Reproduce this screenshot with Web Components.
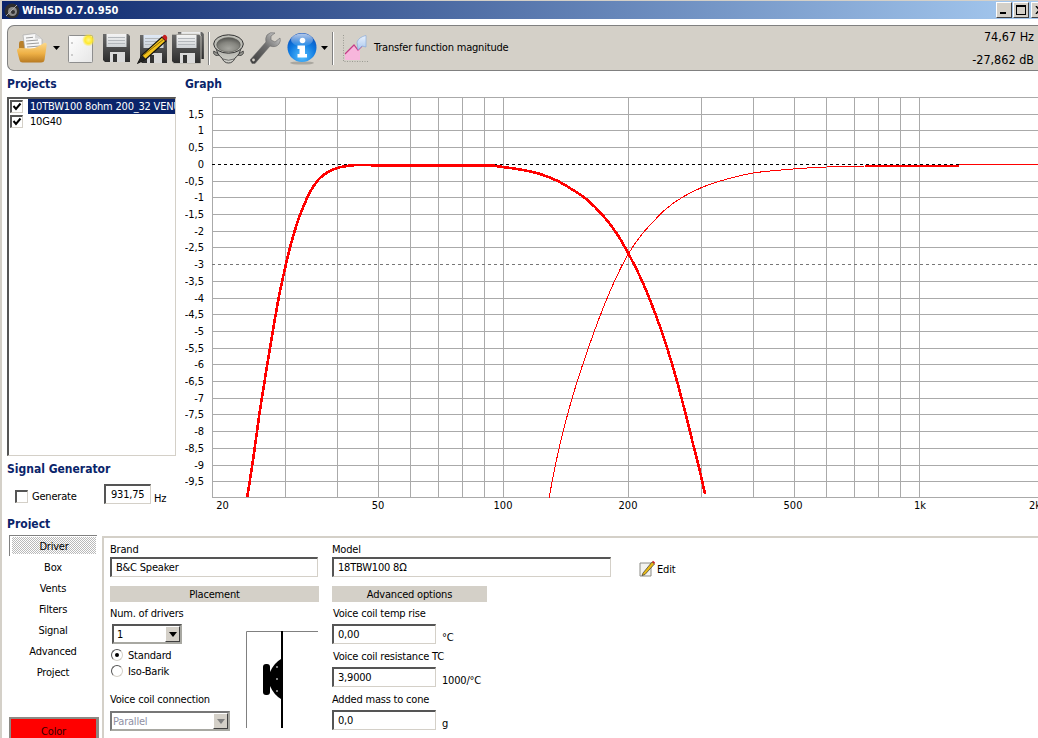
<!DOCTYPE html>
<html lang="en">
<head>
<meta charset="utf-8">
<title>WinISD</title>
<style>
html,body{margin:0;padding:0;background:#fff;overflow:hidden}
</style>
</head>
<body>
<wi-app></wi-app>
<script>
const FONT = '"DejaVu Sans","Liberation Sans",sans-serif';
function def(name, css, html, init){
  customElements.define(name, class extends HTMLElement{
    constructor(){super();const s=this.attachShadow({mode:'open'});s.innerHTML='<style>'+css+'</style>'+html;}
    connectedCallback(){ if(init && !this._d){this._d=1;init(this,this.shadowRoot);} }
  });
}
const floppy=(id,label)=>`<defs><linearGradient id="${id}b" x1="0" y1="0" x2="0" y2="1"><stop offset="0" stop-color="#6a6a6a"/><stop offset="1" stop-color="#2c2c2c"/></linearGradient><linearGradient id="${id}l" x1="0" y1="0" x2="0" y2="1"><stop offset="0" stop-color="${label}"/><stop offset="1" stop-color="#cfd3d6"/></linearGradient></defs>
<path d="M1 0H26L28 2V28H3L1 26Z" fill="url(#${id}b)"/><rect x="4.500" y="0" width="20" height="13" fill="url(#${id}l)"/><path d="M6 3.500H23M6 6.500H23M6 9.500H23" stroke="#b4b8bc" stroke-width="1"/><rect x="8" y="18" width="15" height="10" fill="#d9d9d9"/><rect x="11" y="20" width="4" height="8" fill="#333"/>`;
const ICONS={
 folder:[30,30,`<defs><linearGradient id="fa" x1="0" y1="0" x2="0" y2="1"><stop offset="0" stop-color="#fcd98a"/><stop offset=".55" stop-color="#eeb045"/><stop offset="1" stop-color="#b87a22"/></linearGradient></defs>
<path d="M2 11Q2 8 4 8H9L11 10H24V20H2Z" fill="#b9802a"/><path d="M6 2L18 0.500L25 6L25 17H8Z" fill="#f7f7f7" stroke="#a9a9a9" stroke-width=".7"/><path d="M9 5L16 4.300M9 8L21 7M9.500 11L22 10M10 14L23 13" stroke="#9c9c9c" stroke-width="1"/><path d="M18 .5V5.500L25 6Z" fill="#d6d6d6"/><path d="M0 17.500Q0 15 3 15L13 15.500Q18 15.500 22 13L27 10Q30 9 29.700 12L27.500 27Q27 29.500 24 29.500H5.500Q3 29.500 2.500 27Z" fill="url(#fa)"/>`],
 page:[27,29,`<defs><linearGradient id="pa" x1="0" y1="0" x2="1" y2="1"><stop offset="0" stop-color="#fff"/><stop offset="1" stop-color="#e6e6e6"/></linearGradient><radialGradient id="pb"><stop offset="0" stop-color="#fff68a"/><stop offset=".55" stop-color="#ffe92e"/><stop offset="1" stop-color="#ffe92e" stop-opacity="0"/></radialGradient></defs>
<rect x=".5" y="1.500" width="24" height="27" rx="1" fill="url(#pa)" stroke="#8e8e8e"/><circle cx="4" cy="9" r=".8" fill="#999"/><circle cx="4" cy="21" r=".8" fill="#999"/><circle cx="20.500" cy="6" r="6.500" fill="url(#pb)"/>`],
 save:[28,29,floppy('s','#f4f4f4')],
 saveas:[31,30,floppy('a','#dfe9f7').replace(/<path d="M1 0H26/,'<g transform="translate(2 1)"><path d="M1 0H26')+`</g><path d="M1 29L5 21L25 3L29 7L9 25Z" fill="#f2c21c" stroke="#111" stroke-width="1.200"/><path d="M4 23L27 5" stroke="#8b6a08" stroke-width="1"/><path d="M25 3L27 1Q28 .5 29 1.500L30 3Q30.500 4 30 5L29 7Z" fill="#c81e1e"/><path d="M1 29L5 21L9 25Z" fill="#222"/>`],
 saveall:[32,32,`<g transform="translate(5 0) scale(.96)">${floppy('x','#eeeeee')}</g><g transform="translate(0 3)">${floppy('y','#f4f4f4').replace('M1 0H26L28 2V28H3L1 26Z','M-.5 -.8H27L29 1V28.500H2L-.5 26Z').replace('fill="url(#yb)"','fill="url(#yb)" stroke="#d4d0c8" stroke-width=".8"')}</g>`],
 speaker:[31,30,`<defs><radialGradient id="ca" cx=".5" cy=".75" r=".7"><stop offset="0" stop-color="#a6a6a0"/><stop offset=".6" stop-color="#85857f"/><stop offset="1" stop-color="#5a5a56"/></radialGradient><linearGradient id="cb" x1="0" y1="0" x2="0" y2="1"><stop offset="0" stop-color="#a8a8a2"/><stop offset="1" stop-color="#d2d2cc"/></linearGradient></defs>
<path d="M.8 17Q-.5 20 3 21.500L7 21ZM30.200 17Q31.500 20 28 21.500L24 21Z" fill="#9a9a94" stroke="#333" stroke-width=".8"/><path d="M2.500 12Q4 21 9 24Q11 29 15.500 29Q20 29 22 24Q27 21 28.500 12Z" fill="url(#cb)" stroke="#333" stroke-width=".9"/><path d="M10 25Q15.500 27.500 21 25" fill="none" stroke="#555" stroke-width=".8"/><ellipse cx="15.500" cy="10" rx="14.800" ry="9.200" fill="#bdbdb6" stroke="#333" stroke-width="1"/><ellipse cx="15.500" cy="10.800" rx="11.800" ry="7.200" fill="url(#ca)" stroke="#5d5d58" stroke-width=".6"/>`],
 wrench:[31,32,`<defs><linearGradient id="wa" x1="0" y1="1" x2="1" y2="0"><stop offset="0" stop-color="#3a3a3a"/><stop offset=".55" stop-color="#6f6f6f"/><stop offset="1" stop-color="#d9d9d9"/></linearGradient></defs>
<path d="M0 28L2 31.500L5 31.500L20 14Q26 16 29 12Q31 9 30 6L25 10L21 8L21 4L25 1Q20 -.5 17 3Q15 6 16 10Z" fill="url(#wa)" stroke="#6a6a6a" stroke-width=".6"/><circle cx="3.500" cy="28" r="1.400" fill="#d4d0c8"/>`],
 info:[30,32,`<defs><radialGradient id="ia" cx=".5" cy=".8" r=".8"><stop offset="0" stop-color="#55c0ff"/><stop offset=".6" stop-color="#0d78e0"/><stop offset="1" stop-color="#0a4cb8"/></radialGradient><linearGradient id="ib" x1="0" y1="0" x2="0" y2="1"><stop offset="0" stop-color="#fff" stop-opacity=".7"/><stop offset="1" stop-color="#fff" stop-opacity=".05"/></linearGradient></defs>
<ellipse cx="15" cy="30" rx="12" ry="1.600" fill="#8e8c86" opacity=".6"/><circle cx="15" cy="14.500" r="14.500" fill="url(#ia)"/><ellipse cx="15" cy="7" rx="11" ry="6.500" fill="url(#ib)"/><circle cx="15.500" cy="7.500" r="2.800" fill="#fff"/><path d="M10.500 12.500H18V21H20V24.500H10.500V21H12.500V16H10.500Z" fill="#fff"/>`],
 graph:[27,29,`<defs><linearGradient id="ga" x1="0" y1="0" x2="0" y2="1"><stop offset="0" stop-color="#eaf2fd"/><stop offset="1" stop-color="#a9c7ee"/></linearGradient></defs>
<path d="M2.500 0V26.500H27" fill="none" stroke="#9a9a92" stroke-dasharray="1 1.500"/><path d="M4 25V19L13 10L17 15L19 14V25Z" fill="#f7b6dc"/><path d="M4 19L13 10L17 15L21 11" fill="none" stroke="#c43c86" stroke-width="1.200"/><path d="M17 15L16 7Q18 2 25 .5V12L21 11Z" fill="url(#ga)" stroke="#7da5da" stroke-width=".6"/>`],
 edit:[16,17,`<path d="M1 3H12V16H1Z" fill="#f3f3f0" stroke="#8c8c86"/><path d="M4 13L13 2L15.500 4L6 14.500L3 15.500Z" fill="#e8b917" stroke="#3a3a30" stroke-width=".7"/><path d="M13 2L14 .8L16 2.500L15.500 4Z" fill="#c22"/>`],
 caret:[7,4,`<path d="M0 0H7L3.500 4Z" fill="#000"/>`],
 app:[16,16,`<circle cx="8" cy="8" r="7.500" fill="#2e2e2e"/><circle cx="8.500" cy="8.500" r="4.500" fill="#8a8a8a"/><circle cx="9" cy="9" r="2" fill="#333"/><path d="M2 13L13 2" stroke="#aaa" stroke-width="1"/>`]
};
def('wi-icon',':host{display:block;flex:none;line-height:0}svg{display:block}','',(h,s)=>{
  const [w,v,body]=ICONS[h.getAttribute('name')];
  s.innerHTML+=`<svg xmlns="http://www.w3.org/2000/svg" width="${w}" height="${v}" viewBox="0 0 ${w} ${v}">${body}</svg>`;
});
def('wi-heading',`:host{display:block;height:16px;font:bold 12px/16px ${FONT};font-stretch:condensed;letter-spacing:0;color:#0a246a;overflow:hidden;white-space:nowrap}`,'<slot></slot>');
def('wi-label',`:host{display:block;height:14px;line-height:16px;white-space:nowrap}`,'<slot></slot>');
def('wi-band',`:host{display:block;height:16px;line-height:18px;background:#d4d0c8;text-align:center;white-space:nowrap}`,'<slot></slot>');
def('wi-input',`:host{display:block;box-sizing:border-box;height:20px;border-style:solid;border-width:2px 1px 1px 2px;border-color:#555 #d4d0c8 #d4d0c8 #555;background:#fff;padding-left:4px;line-height:18px;white-space:nowrap;overflow:hidden}`,'<slot></slot>');
def('wi-select',`:host{display:flex;box-sizing:border-box;height:20px;border-style:solid;border-width:2px;border-color:#555 #a8a8a2 #a8a8a2 #555;background:#fff;line-height:18px;white-space:nowrap}
.t{flex:1;padding-left:3px;overflow:hidden}
.b{width:15px;box-sizing:border-box;background:#d4d0c8;border:1px solid;border-color:#fff #404040 #404040 #fff;display:flex;align-items:center;justify-content:center}
.b i{width:0;height:0;border:4px solid transparent;border-top:5px solid #000;border-bottom:0}
:host([disabled]) .t{color:#8f8fa3;padding-left:1px}
:host([disabled]) .b i{border-top-color:#808080}
:host([disabled]){border-color:#777 #a8a8a2 #a8a8a2 #777}`,'<div class="t"><slot></slot></div><div class="b"><i></i></div>');
def('wi-check',`:host{display:block;flex:none;box-sizing:border-box;width:13px;height:13px;border-style:solid;border-width:2px 1px 1px 2px;border-color:#555 #d4d0c8 #d4d0c8 #555;background:#fff}
svg{display:none;width:10px;height:10px}
:host([checked]) svg{display:block}`,'<svg viewBox="0 0 10 10"><path d="M1.500 4L4 7L8.500 1.500" fill="none" stroke="#000" stroke-width="2"/></svg>');
def('wi-radio',`:host{display:flex;align-items:center;height:16px;line-height:16px;white-space:nowrap}
.c{box-sizing:border-box;width:12px;height:12px;border-radius:50%;border:1px solid;border-color:#555 #d4d0c8 #d4d0c8 #555;margin:0 5px 0 1px;display:flex;align-items:center;justify-content:center;background:#fff}
.c i{width:4px;height:4px;border-radius:50%;background:#000;display:none}
.x{padding-top:2px}
:host([checked]) .c i{display:block}`,'<div class="c"><i></i></div><span class="x"><slot></slot></span>');
def('wi-listrow',`:host{display:flex;align-items:center;height:15px;line-height:15px;white-space:nowrap;overflow:hidden;padding-left:1px}
.t{margin-left:5px;padding-left:2px;flex:1;overflow:hidden;height:15px}
:host([selected]) .t{background:#0a246a;color:#fff}`,'<wi-check checked></wi-check><div class="t"><slot></slot></div>');
def('wi-list',`:host{display:block;box-sizing:border-box;border-style:solid;border-width:2px 1px 1px 2px;border-color:#555 #d4d0c8 #d4d0c8 #555;background:#fff;overflow:hidden;padding-top:0}`,'<slot></slot>');
def('wi-winbtn',`:host{display:flex;flex:none;box-sizing:border-box;width:16px;height:16px;background:#d4d0c8;border:1px solid;border-color:#fff #404040 #404040 #fff;align-items:center;justify-content:center}
svg{display:block}`,'<slot></slot>');
def('wi-titlebar',`:host{display:flex;align-items:center;height:18px;background:linear-gradient(90deg,#0a246a,#a6caf0);color:#fff;font:bold 11px ${FONT};font-stretch:condensed;letter-spacing:0;white-space:nowrap;overflow:hidden}
wi-icon{margin:1px 2px 0 2px}
.s{flex:1}
.b{display:flex;gap:1px;margin-right:-9px}
.b wi-winbtn+wi-winbtn+wi-winbtn{margin-left:1px}`,
`<wi-icon name="app"></wi-icon><span><slot></slot></span><div class="s"></div><div class="b">
<wi-winbtn><svg width="8" height="8"><rect x="0" y="6" width="6" height="2" fill="#000"/></svg></wi-winbtn>
<wi-winbtn><svg width="10" height="10"><rect x=".5" y="1" width="9" height="8.500" fill="none" stroke="#000"/><rect y="0" width="10" height="2" fill="#000"/></svg></wi-winbtn>
<wi-winbtn><svg width="9" height="8"><path d="M1 0L8 8M8 0L1 8" stroke="#000" stroke-width="1.500"/></svg></wi-winbtn></div>`);
def('wi-toolbar',`:host{display:flex;align-items:center;box-sizing:border-box;height:46px;width:1031px;background:#d4d0c8;border:1px solid #808080;border-right:0;border-radius:7px 0 0 7px;white-space:nowrap}
.sep{width:1px;height:33px;background:#808080;border-right:1px solid #fff;flex:none}
.lbl{margin-left:6px;margin-top:-2px;flex:1}
.r{display:flex;flex-direction:column;align-items:flex-end;justify-content:space-between;height:41px;font-size:12.500px;letter-spacing:0;line-height:18px;margin-right:4px;margin-top:1px}`,
`<wi-icon name="folder" style="margin-left:9px"></wi-icon>
<wi-icon name="caret" style="margin-left:6px"></wi-icon>
<wi-icon name="page" style="margin-left:8px;margin-top:1px"></wi-icon>
<wi-icon name="save" style="margin-left:7px;margin-top:1px"></wi-icon>
<wi-icon name="saveas" style="margin-left:7px;margin-top:1px"></wi-icon>
<wi-icon name="saveall" style="margin-left:4px"></wi-icon>
<div class="sep" style="margin-left:4px"></div>
<wi-icon name="speaker" style="margin-left:3px;margin-top:1px"></wi-icon>
<wi-icon name="wrench" style="margin-left:6px"></wi-icon>
<wi-icon name="info" style="margin-left:6px;margin-top:1px"></wi-icon>
<wi-icon name="caret" style="margin-left:4px"></wi-icon>
<div class="sep" style="margin-left:4px"></div>
<wi-icon name="graph" style="margin-left:7px;margin-top:2px"></wi-icon>
<div class="lbl">Transfer function magnitude</div>
<div class="r"><span>74,67 Hz</span><span>-27,862 dB</span></div>`);
def('wi-tabs',`:host{display:flex;flex-direction:column;height:203px;flex:none;width:90px;position:relative}
.t{height:21px;line-height:23px;text-align:center;width:88px;box-sizing:border-box}
.t.on{border-top:1px solid #808080;border-left:1px solid #808080;padding:1px 1px 2px 2px;line-height:19px}
.t.on span{display:block;height:17px;background:repeating-conic-gradient(#b9b9b9 0 25%,#fff 0 50%) 0 0/2px 2px}
.c{margin-top:auto;height:21px;box-sizing:border-box;background:#f00;border:2px solid #8c8a84;border-bottom:0;border-right-width:3px;text-align:center;line-height:26px;color:#300}`,
`<div class="t on"><span>Driver</span></div><div class="t">Box</div><div class="t">Vents</div><div class="t">Filters</div><div class="t">Signal</div><div class="t">Advanced</div><div class="t">Project</div><div class="c">Color</div>`);
def('wi-diagram',`:host{display:block;flex:none;width:72px;height:97px;margin-top:11px}svg{display:block}`,
`<svg width="72" height="97" viewBox="0 0 72 97" shape-rendering="geometricPrecision"><path d="M.5 97V.5H72" fill="none" stroke="#808080"/><rect x="35" y="0" width="2" height="97" fill="#000"/><rect x="17" y="33" width="7" height="31" rx="3" fill="#000"/><path d="M24 41Q28 32 35 28V68Q28 64 24 55Z" fill="#000"/><circle cx="31" cy="36" r="1" fill="#aaa"/><circle cx="31" cy="48" r="1" fill="#aaa"/><circle cx="31" cy="60" r="1" fill="#aaa"/></svg>`);
def('wi-panel',`:host{display:grid;grid-template-columns:222px 1fr;box-sizing:border-box;height:202px;margin-top:1px;flex:1;border-left:2px solid #d4d0c8;border-top:2px solid #d4d0c8;padding:4px 0 0 6px;overflow:hidden}
.col{display:flex;flex-direction:column;align-items:flex-start}
.row{display:flex;align-items:flex-start;height:20px}
.u{margin-left:6px;line-height:14px;margin-top:7px}
.pl{display:flex}
.pl .l{width:136px;display:flex;flex-direction:column;align-items:flex-start}
.edit{display:flex;align-items:center;margin:3px 0 0 28px;gap:2px}
.edit span{padding-top:2px}`,
`<div class="col">
<wi-label>Brand</wi-label>
<wi-input style="width:208px;margin-top:1px">B&amp;C Speaker</wi-input>
<wi-band style="width:209px;margin-top:9px">Placement</wi-band>
<wi-label style="margin-top:4px">Num. of drivers</wi-label>
<div class="pl">
 <div class="l">
  <wi-select style="width:70px;margin:4px 0 0 2px">1</wi-select>
  <wi-radio checked style="margin-top:3px">Standard</wi-radio>
  <wi-radio>Iso-Barik</wi-radio>
  <wi-label style="margin-top:13px">Voice coil connection</wi-label>
  <wi-select disabled style="width:120px;margin-top:5px">Parallel</wi-select>
 </div>
 <wi-diagram></wi-diagram>
</div>
</div>
<div class="col">
<wi-label>Model</wi-label>
<div class="row" style="margin-top:1px">
 <wi-input style="width:279px">18TBW100 8Ω</wi-input>
 <div class="edit"><wi-icon name="edit"></wi-icon><span>Edit</span></div>
</div>
<wi-band style="width:155px;margin-top:9px">Advanced options</wi-band>
<wi-label style="margin:4px 0 0 1px">Voice coil temp rise</wi-label>
<div class="row" style="margin-top:4px"><wi-input style="width:104px">0,00</wi-input><span class="u">°C</span></div>
<wi-label style="margin:5px 0 0 1px">Voice coil resistance TC</wi-label>
<div class="row" style="margin-top:4px"><wi-input style="width:104px">3,9000</wi-input><span class="u">1000/°C</span></div>
<wi-label style="margin-top:5px">Added mass to cone</wi-label>
<div class="row" style="margin-top:4px"><wi-input style="width:104px">0,0</wi-input><span class="u">g</span></div>
</div>`);
const HY=[[114,'1,5'],[130,'1'],[147,'0,5'],[164,'0'],[181,'-0,5'],[197,'-1'],[214,'-1,5'],[231,'-2'],[247,'-2,5'],[264,'-3'],[281,'-3,5'],[298,'-4'],[314,'-4,5'],[331,'-5'],[348,'-5,5'],[364,'-6'],[381,'-6,5'],[398,'-7'],[414,'-7,5'],[431,'-8'],[448,'-8,5'],[465,'-9'],[481,'-9,5']];
const VX=[212,285,337,378,410,438,462,484,503,628,701,753,794,826,854,878,900,919];
const pts=s=>s.split(' ').map(p=>p.split(',').map(Number));
// Catmull-Rom through the traced points, so the curves have no visible corners
function smooth(s){
  const p=pts(s);let d=`M${p[0][0]} ${p[0][1]}`;
  for(let i=0;i<p.length-1;i++){
    const a=p[i-1]||p[i],b=p[i],c=p[i+1],e=p[i+2]||c;
    const f=n=>n.toFixed(2);
    d+=`C${f(b[0]+(c[0]-a[0])/6)} ${f(b[1]+(c[1]-a[1])/6)} ${f(c[0]-(e[0]-b[0])/6)} ${f(c[1]-(e[1]-b[1])/6)} ${c[0]} ${c[1]}`;
  }
  return d;
}
const RISE='247.3,497 253.3,458 260,410 268.3,358 278.3,300 286,264 290,247.5 295,230 300,215 306.7,199 313,187 320,178 328,172 337,168 347,166 357,165 371,165';
const FALL='495,166 503,167 523,170 540,174 556.7,180.500 573,190 586.7,199.500 603,215.500 616.7,233.500 628,252.800 640,276.500 650,300 660,326.7 668.3,351.7 676.7,380 685,411.7 693.3,445 700,471.7 705,494';
const THIN='549,497.7 558.3,451.7 568.3,411.7 578.3,378 588.3,348.3 600,316 615,280 628.3,254 640,236.7 651.7,223.3 666.7,208.3 683.3,196.7 701.7,187.5 720,181 753.3,173 793.3,169 826.7,167 865,166';
def('wi-graph',`:host{display:block;width:853px;height:415px;margin-top:5px}svg{display:block;font:11px ${FONT};font-stretch:condensed;letter-spacing:0;fill:#000}`,'',(h,s)=>{
  let g='';
  for(const [y] of HY) if(y!==164&&y!==264) g+=`<path d="M212 ${y+.5}H1038"/>`;
  g+='<path d="M212 97.500H1038M212 497.500H1038"/>';
  for(const x of VX) g+=`<path d="M${x+.5} 97V498"/>`;
  let t='';
  for(const [y,l] of HY) t+=`<text x="204" y="${y+4}" text-anchor="end">${l}</text>`;
  for(const [x,l,a] of [[222.5,'20','middle'],[378,'50','middle'],[503,'100','middle'],[628,'200','middle'],[793,'500','middle'],[920,'1k','middle'],[1029,'2k','start']])
    t+=`<text x="${x}" y="509" text-anchor="${a}">${l}</text>`;
  s.innerHTML+=`<svg xmlns="http://www.w3.org/2000/svg" width="853" height="415" viewBox="185 97 853 415">
  <g stroke="#aaa" fill="none" shape-rendering="crispEdges">${g}</g>
  <g fill="none" shape-rendering="crispEdges">
   <path d="M212 164.500H960" stroke="#000" stroke-dasharray="3 3"/>
   <path d="M212 264.500H1038" stroke="#777" stroke-dasharray="3 3"/>
   <path d="${smooth(THIN)}" stroke="#f00" stroke-width="1"/>
   <path d="M865 165.500H959" stroke="#f00" stroke-width="2"/>
   <path d="M959 164.500H1038" stroke="#f00" stroke-width="1.500"/>
   <path d="${smooth(RISE)}" stroke="#f00" stroke-width="2.600"/>
   <path d="M371 165.500H495" stroke="#f00" stroke-width="2.600"/>
   <path d="${smooth(FALL)}" stroke="#f00" stroke-width="2.600"/>
  </g>${t}</svg>`;
});
def('wi-app',`:host{display:block;width:1038px;height:738px;box-sizing:border-box;border-top:1px solid #d4d0c8;border-left:2px solid #d4d0c8;overflow:hidden;background:#fff;color:#000;font:11px ${FONT};font-stretch:condensed;letter-spacing:-.2px}
wi-toolbar{margin:6px 0 0 5px}
.main{display:flex;height:441px}
.left{width:169px;margin-left:5px;flex:none}
.right{margin-left:9px;flex:none}
.h{margin-top:5px}
.gen{display:flex;align-items:flex-start;height:20px;margin-top:7px}
.bottom{display:flex;margin-left:7px}`,
`<wi-titlebar>WinISD 0.7.0.950</wi-titlebar>
<wi-toolbar></wi-toolbar>
<div class="main">
 <div class="left">
  <wi-heading class="h">Projects</wi-heading>
  <wi-list style="height:359px;margin-top:5px;display:block">
    <wi-listrow selected>10TBW100 8ohm 200_32 VENUE</wi-listrow>
    <wi-listrow>10G40</wi-listrow>
  </wi-list>
  <wi-heading style="margin-top:5px">Signal Generator</wi-heading>
  <div class="gen">
    <wi-check style="margin:6px 0 0 8px"></wi-check>
    <span style="margin:6px 0 0 4px;line-height:14px;width:72px">Generate</span>
    <wi-input style="width:47px;flex:none;padding-left:5px">931,75</wi-input>
    <span style="margin:8px 0 0 3px;line-height:14px">Hz</span>
  </div>
 </div>
 <div class="right">
  <wi-heading class="h">Graph</wi-heading>
  <wi-graph></wi-graph>
 </div>
</div>
<wi-heading style="margin:4px 0 6px 5px;height:13px">Project</wi-heading>
<div class="bottom"><wi-tabs></wi-tabs><wi-panel style="margin-left:3px"></wi-panel></div>`);
</script>
</body>
</html>
